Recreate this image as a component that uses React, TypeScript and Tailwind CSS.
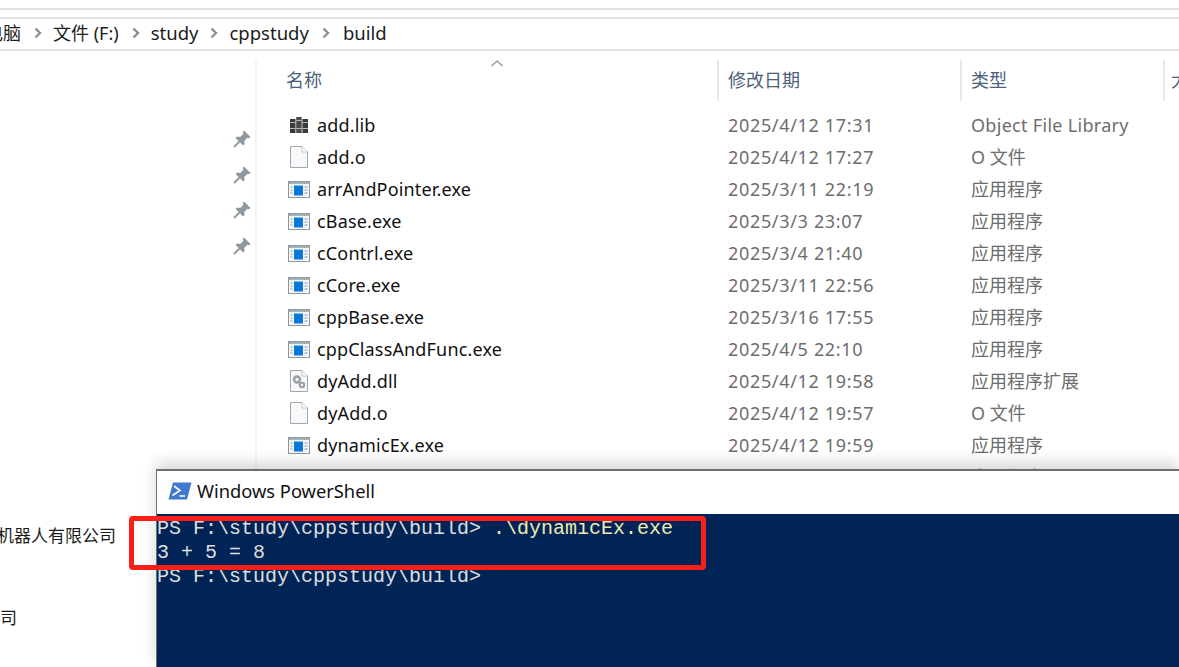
const rows = [
  { name: "add.lib", date: "2025/4/12 17:31", type: "Object File Library", icon: "lib" },
  { name: "add.o", date: "2025/4/12 17:27", type: "O 文件", icon: "file" },
  { name: "arrAndPointer.exe", date: "2025/3/11 22:19", type: "应用程序", icon: "exe" },
  { name: "cBase.exe", date: "2025/3/3 23:07", type: "应用程序", icon: "exe" },
  { name: "cContrl.exe", date: "2025/3/4 21:40", type: "应用程序", icon: "exe" },
  { name: "cCore.exe", date: "2025/3/11 22:56", type: "应用程序", icon: "exe" },
  { name: "cppBase.exe", date: "2025/3/16 17:55", type: "应用程序", icon: "exe" },
  { name: "cppClassAndFunc.exe", date: "2025/4/5 22:10", type: "应用程序", icon: "exe" },
  { name: "dyAdd.dll", date: "2025/4/12 19:58", type: "应用程序扩展", icon: "dll" },
  { name: "dyAdd.o", date: "2025/4/12 19:57", type: "O 文件", icon: "file" },
  { name: "dynamicEx.exe", date: "2025/4/12 19:59", type: "应用程序", icon: "exe" },
  { name: "dyStatic.exe", date: "2025/4/12 19:50", type: "应用程序", icon: "exe" },
];

const uiFont = "font-['Noto_Sans','Noto_Sans_CJK_SC',sans-serif]";

function Chevron() {
  return (
    <svg width="8" height="12" viewBox="0 0 8 12" className="shrink-0">
      <path d="M1.5 1.5 6 6l-4.5 4.5" fill="none" stroke="#8a8f94" strokeWidth="2.4" />
    </svg>
  );
}

function Pin() {
  return (
    <svg width="18" height="18" viewBox="0 0 18 18">
      <path d="M11 0.5 17.5 7 16 8.2 14.4 7.8 11.2 11 11.6 14.2 10.2 15.6 2.6 8 4 6.6 7.2 7 10.4 3.8 9.8 2Z" fill="#8d999f" />
      <path d="M6.5 11.5 1 17" stroke="#8d999f" strokeWidth="1.8" />
    </svg>
  );
}

function FileIcon({ kind }: { kind: string }) {
  if (kind === "lib") {
    return (
      <svg width="18" height="16" viewBox="0 0 18 16">
        <rect x="0" y="2" width="5.5" height="14" fill="#3a3a3a" />
        <rect x="6.2" y="0" width="5.5" height="16" fill="#4a4a4a" />
        <rect x="12.4" y="2" width="5.6" height="14" fill="#3a3a3a" />
        <path d="M0 5.5h5.5M0 11.5h5.5M6.2 3.5h5.5M6.2 11.5h5.5M12.4 5.5h5.6M12.4 11.5h5.6" stroke="#b8b8b8" strokeWidth="1" />
      </svg>
    );
  }
  if (kind === "exe") {
    return (
      <svg width="22" height="17" viewBox="0 0 22 17">
        <rect x="0.5" y="0.5" width="21" height="16" fill="#f4f6f8" stroke="#8e979f" />
        <rect x="1" y="1" width="20" height="2" fill="#a8b0b8" />
        <rect x="6" y="4.5" width="9" height="10" fill="#0a78d7" />
        <path d="M2.5 6h2M2.5 9h2M2.5 12h2M16.5 6h3M16.5 9h3M16.5 12h3" stroke="#7d9ab5" strokeWidth="1.2" />
      </svg>
    );
  }
  return (
    <svg width="18" height="22" viewBox="0 0 18 22">
      <path d="M0.5 0.5H12L17.5 6V21.5H0.5Z" fill="#f7f8f9" stroke="#a3a7ab" />
      <path d="M12 0.5V6H17.5" fill="#fff" stroke="#c2c5c8" />
      {kind === "dll" && (
        <g fill="none" stroke="#9a9ea2">
          <circle cx="7" cy="9.5" r="3" strokeWidth="2.4" />
          <circle cx="12" cy="15" r="2.2" strokeWidth="2" />
        </g>
      )}
    </svg>
  );
}

function PowerShellIcon() {
  return (
    <svg width="24" height="18" viewBox="0 0 24 18">
      <path d="M5 0.5H23.5L19 17.5H0.5Z" fill="#3f78cf" />
      <path d="M6 4l6 4.5-7.5 5" fill="none" stroke="#fff" strokeWidth="1.6" />
      <path d="M11.5 14h5.5" stroke="#fff" strokeWidth="1.6" />
    </svg>
  );
}

export default function App() {
  return (
    <div className={`relative flex h-[667px] w-[1179px] flex-col overflow-hidden bg-white text-black ${uiFont}`}>
      <div className="h-[8px] shrink-0" />
      <div className="h-[9px] shrink-0 border-t-2 border-[#e3e3e3]" />
      <div className="flex h-[34px] shrink-0 items-center overflow-hidden border-y-2 border-[#e3e3e3] pb-[2px] text-[18px] text-[#1b1b1b]">
        <div className="ml-[-15px] w-[38px] shrink-0 whitespace-nowrap">电脑</div>
        <div className="ml-[11px]"><Chevron /></div>
        <span className="ml-[11px] whitespace-nowrap">文件 (F:)</span>
        <div className="ml-[13px]"><Chevron /></div>
        <span className="ml-[11px] text-[18.5px]">study</span>
        <div className="ml-[12px]"><Chevron /></div>
        <span className="ml-[11px] text-[18.5px]">cppstudy</span>
        <div className="ml-[13px]"><Chevron /></div>
        <span className="ml-[13px] text-[18.5px]">build</span>
      </div>

      <div className="flex min-h-0 flex-1">
        <aside className="mt-[9px] flex w-[257px] shrink-0 flex-col overflow-hidden border-r-2 border-[#f3f3f3]">
          <div className="h-[70px] shrink-0" />
          <div className="flex flex-col items-end gap-[17.6px] pr-[4px]">
            <Pin />
            <Pin />
            <Pin />
            <Pin />
          </div>
          <div className="mt-[268px] flex w-[116px] justify-end whitespace-nowrap text-[17px] text-[#1b1b1b]">
            机器人有限公司
          </div>
          <div className="mt-[57px] flex w-[17px] justify-end whitespace-nowrap text-[17px] text-[#1b1b1b]">
            公司
          </div>
        </aside>

        <main className="min-w-0 flex-1 pt-[9px]">
          <div className="relative flex h-[41px] items-center whitespace-nowrap text-[18px] text-[#4c607a]">
            <div className="flex h-full w-[462px] shrink-0 items-center border-r-2 border-[#e8e8e8] pl-[29px]">名称</div>
            <div className="flex h-full w-[243px] shrink-0 items-center border-r-2 border-[#e8e8e8] pl-[9px]">修改日期</div>
            <div className="flex h-full w-[203px] shrink-0 items-center border-r-2 border-[#e8e8e8] pl-[9px]">类型</div>
            <div className="pl-[6px]">大小</div>
            <svg width="12" height="7" viewBox="0 0 12 7" className="absolute left-[234px] top-[0px]">
              <path d="M0.5 6 6 1l5.5 5" fill="none" stroke="#8a8f94" strokeWidth="1.2" />
            </svg>
          </div>
          <div className="mt-[8px] flex flex-col">
            {rows.map((row) => (
              <div key={row.name} className="flex h-[32px] items-center text-[18px]">
                <div className="flex w-[60px] shrink-0 justify-center pl-[23px]">
                  <FileIcon kind={row.icon} />
                </div>
                <div className="w-[411px] shrink-0 whitespace-nowrap tracking-[0.16px] text-[#111]">{row.name}</div>
                <div className="w-[243px] shrink-0 whitespace-nowrap tracking-[0.67px] text-[#6d6d6d]">{row.date}</div>
                <div className={row.icon === "lib" ? "whitespace-nowrap tracking-[0.3px] text-[#6d6d6d]" : "whitespace-nowrap text-[#6d6d6d]"}>
                  {row.type}
                </div>
              </div>
            ))}
          </div>
        </main>
      </div>

      {/* console window sits on top of the explorer */}
      <div className="absolute left-[156px] top-[469px] flex h-[198px] w-[1023px] flex-col border-l border-t-2 border-[#6f6f6f] bg-white shadow-[0_-6px_14px_rgba(0,0,0,0.16)]">
        <div className="flex h-[43px] shrink-0 items-center gap-[5px] pb-[3px] pl-[11px] text-[18.3px] text-[#111]">
          <PowerShellIcon />
          <span>Windows PowerShell</span>
        </div>
        <div className="flex-1 bg-[#012456] pt-[3px] font-['Liberation_Mono',monospace] text-[20px] leading-[24px] text-[#dedede]">
          <div>
            PS F:\study\cppstudy\build&gt; <span className="text-[#f0e9ae]">.\dynamicEx.exe</span>
          </div>
          <div>3 + 5 = 8</div>
          <div>PS F:\study\cppstudy\build&gt;</div>
        </div>
      </div>

      {/* red annotation drawn over the screenshot */}
      <div className="absolute left-[129px] top-[516px] h-[54px] w-[577px] rounded-[4px] border-[5px] border-[#fb1f18]" />
    </div>
  );
}
